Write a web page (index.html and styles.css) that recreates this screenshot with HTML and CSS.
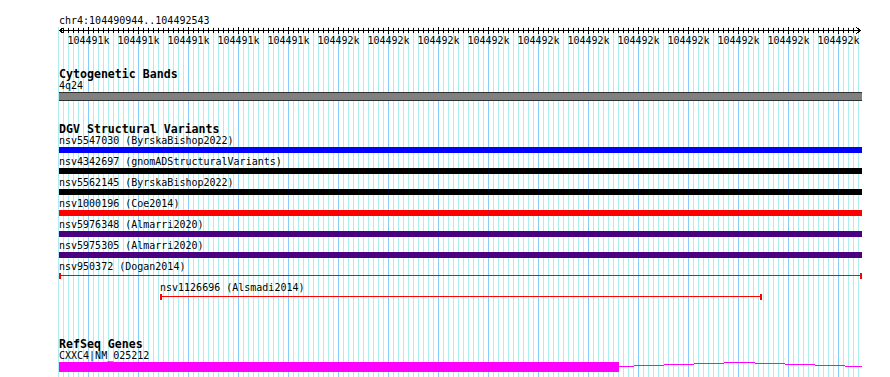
FILE: index.html
```html
<!DOCTYPE html>
<html lang="en">
<head>
    <meta charset="UTF-8">
    <title>Genome Browser - chr4:104490944..104492543</title>
    <link rel="stylesheet" href="styles.css">
</head>
<body>
    <div class="location">chr4:104490944..104492543</div>

    <div class="tracks">
        <svg class="ruler" width="803" height="20" viewBox="0 0 803 20">
            <defs>
                <pattern id="minorTick" x="4" y="0" width="5" height="20" patternUnits="userSpaceOnUse">
                    <rect x="0" y="1" width="1" height="5" fill="#000"/>
                </pattern>
                <pattern id="majorTick" x="29" y="0" width="50" height="20" patternUnits="userSpaceOnUse">
                    <rect x="0" y="0" width="1" height="7" fill="#000"/>
                </pattern>
            </defs>
            <rect x="0" y="3" width="802" height="1" fill="#000"/>
            <rect x="4" y="0" width="796" height="8" fill="url(#minorTick)"/>
            <rect x="4" y="0" width="796" height="8" fill="url(#majorTick)"/>
            <polyline points="4.5,0.5 0.5,3.5 4.5,6.5" fill="none" stroke="#000"/>
            <polyline points="797.5,0.5 801.5,3.5 797.5,6.5" fill="none" stroke="#000"/>
            <g class="ruler-labels">
                <text x="29.5" y="17">104491k</text>
                <text x="79.5" y="17">104491k</text>
                <text x="129.5" y="17">104491k</text>
                <text x="179.5" y="17">104491k</text>
                <text x="229.5" y="17">104491k</text>
                <text x="279.5" y="17">104492k</text>
                <text x="329.5" y="17">104492k</text>
                <text x="379.5" y="17">104492k</text>
                <text x="429.5" y="17">104492k</text>
                <text x="479.5" y="17">104492k</text>
                <text x="529.5" y="17">104492k</text>
                <text x="579.5" y="17">104492k</text>
                <text x="629.5" y="17">104492k</text>
                <text x="679.5" y="17">104492k</text>
                <text x="729.5" y="17">104492k</text>
                <text x="779.5" y="17">104492k</text>
            </g>
        </svg>

        <div class="track track-bands">
            <div class="track-title">Cytogenetic Bands</div>
            <div class="label">4q24</div>
            <div class="band"></div>
        </div>

        <div class="track track-dgv">
            <div class="track-title">DGV Structural Variants</div>
            <div class="feature">
                <div class="label">nsv5547030 (ByrskaBishop2022)</div>
                <div class="bar bar-blue"></div>
            </div>
            <div class="feature">
                <div class="label">nsv4342697 (gnomADStructuralVariants)</div>
                <div class="bar bar-black"></div>
            </div>
            <div class="feature">
                <div class="label">nsv5562145 (ByrskaBishop2022)</div>
                <div class="bar bar-black"></div>
            </div>
            <div class="feature">
                <div class="label">nsv1000196 (Coe2014)</div>
                <div class="bar bar-red"></div>
            </div>
            <div class="feature">
                <div class="label">nsv5976348 (Almarri2020)</div>
                <div class="bar bar-indigo"></div>
            </div>
            <div class="feature">
                <div class="label">nsv5975305 (Almarri2020)</div>
                <div class="bar bar-indigo"></div>
            </div>
            <div class="feature">
                <div class="label">nsv950372 (Dogan2014)</div>
                <div class="span-line"></div>
            </div>
            <div class="feature" style="margin-left: 101px; width: 602px;">
                <div class="label">nsv1126696 (Alsmadi2014)</div>
                <div class="span-line"></div>
            </div>
        </div>

        <div class="track track-genes">
            <div class="track-title">RefSeq Genes</div>
            <div class="label label-gene">CXXC4|NM_025212</div>
            <svg class="gene" width="803" height="10" viewBox="0 0 803 10">
                <rect x="0" y="0" width="560" height="10"/>
                <rect x="560" y="4" width="15" height="1"/>
                <rect x="575" y="3" width="30" height="1"/>
                <rect x="605" y="2" width="30" height="1"/>
                <rect x="635" y="1" width="30" height="1"/>
                <rect x="665" y="0" width="31" height="1"/>
                <rect x="696" y="1" width="30" height="1"/>
                <rect x="726" y="2" width="30" height="1"/>
                <rect x="756" y="3" width="30" height="1"/>
                <rect x="786" y="4" width="17" height="1"/>
            </svg>
        </div>
    </div>
</body>
</html>
```

FILE: styles.css
```css
* {
    box-sizing: border-box;
    margin: 0;
    padding: 0;
}

html, body {
    height: 100%;
    overflow: hidden;
}

body {
    font-family: "DejaVu Sans Mono", "Liberation Mono", monospace;
    font-size: 10px;
    color: #000;
    background: #fff;
}

.location {
    padding: 15px 0 0 59px;
    line-height: 12px;
    white-space: nowrap;
}

/* grid: minor lines every 5px, major every 50px */
.tracks {
    margin-left: 55px;
    width: 807px;
    padding-left: 4px;
    min-height: calc(100vh - 27px);
    background-image:
        linear-gradient(to right, #87cefa 1px, transparent 1px),
        linear-gradient(to right, #afeeee 1px, transparent 1px);
    background-size: 50px 100%, 5px 100%;
    background-position: 33px 0, 3px 0;
    background-repeat: repeat-x;
}

.ruler {
    display: block;
    shape-rendering: crispEdges;
}

.ruler-labels text {
    font-family: "DejaVu Sans Mono", monospace;
    font-size: 10px;
    text-anchor: middle;
    fill: #000;
}

.track-title {
    font-weight: bold;
    font-size: 11.6px;
    line-height: 12px;
    white-space: nowrap;
}

.label {
    line-height: 12px;
    white-space: nowrap;
}

.label-gene {
    position: relative;
    z-index: 1;
}

.track-bands {
    margin-top: 21px;
}

.band {
    height: 9px;
    background: #808080;
    border-top: 1px solid #303030;
    border-bottom: 1px solid #303030;
}

.track-dgv {
    margin-top: 22px;
}

.feature {
    height: 21px;
}

.bar {
    height: 6px;
}

.bar-blue {
    background: #0000ff;
}

.bar-black {
    background: #000;
}

.bar-red {
    background: #ff0000;
}

.bar-indigo {
    background: #4b0082;
}

.span-line {
    height: 6px;
    border-left: 2px solid #ff0000;
    border-right: 2px solid #ff0000;
    background: linear-gradient(#ff0000, #ff0000) 0 2px / 100% 1px no-repeat;
}

.track-genes {
    margin-top: 35px;
}

.gene {
    display: block;
    fill: #ff00ff;
    shape-rendering: crispEdges;
}
```
